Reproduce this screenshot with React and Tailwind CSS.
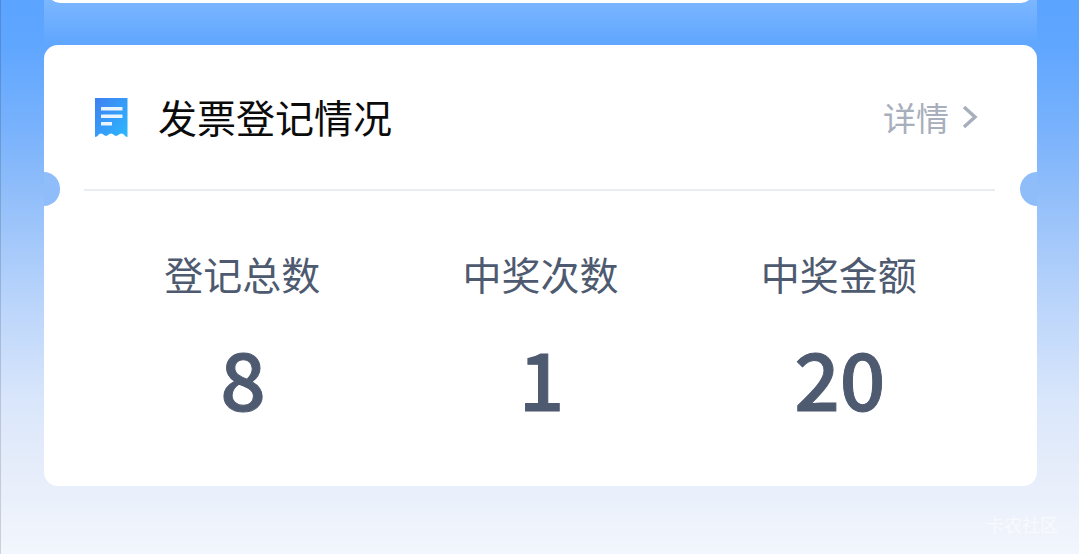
import React from 'react';

const font = { fontFamily: '"Noto Sans CJK SC", "Noto Sans", sans-serif' };

const stats = [
  { label: '登记总数', value: '8' },
  { label: '中奖次数', value: '1' },
  { label: '中奖金额', value: '20' },
];

const ReceiptIcon = () => (
  <svg width="33" height="39" viewBox="0 0 33 39" className="shrink-0">
    <defs>
      <linearGradient id="receipt" x1="0" y1="0" x2="1" y2="1">
        <stop offset="0" stopColor="#3f7ff1" />
        <stop offset="1" stopColor="#2cb8ff" />
      </linearGradient>
    </defs>
    <path
      d="M0 0H32.5V39C30 39 29 35.500 26.500 35.500C24 35.500 23 38 21 38C19 38 18.500 35.500 16 35.500C13.500 35.500 13 38 11 38C9 38 8.500 35.500 6 35.500C3.500 35.500 3 39 0 39Z"
      fill="url(#receipt)"
    />
    <rect x="6" y="9" width="21.500" height="3.400" rx="0.500" fill="#eaf4ff" />
    <rect x="6" y="16.500" width="21.500" height="3.400" rx="0.500" fill="#eaf4ff" />
    <rect x="6" y="24" width="11" height="3.400" rx="0.500" fill="#eaf4ff" />
  </svg>
);

export default function App() {
  return (
    <div
      style={font}
      className="relative h-[554px] w-[1079px] overflow-hidden border-l border-black/15 bg-[linear-gradient(180deg,#5ba4ff_0px,#5fa6ff_45px,#79b2fc_130px,#8fbdfa_189px,#b9d4fb_300px,#d9e6fb_400px,#e6edfa_470px,#f2f6fd_554px)]"
    >
      {/* lighter strip between the two cards */}
      <div className="absolute left-[43px] top-0 h-[45px] w-[993px] bg-[linear-gradient(180deg,rgba(255,255,255,0.2),rgba(255,255,255,0))]" />

      <div className="relative ml-[47px] mr-[46px] mt-[-17px] h-[20px] rounded-b-[12px] bg-white" />

      <div className="relative ml-[43px] mt-[42px] h-[441px] w-[993px] overflow-hidden rounded-[14px] bg-white">
        <div className="absolute left-[-17px] top-[127px] h-[34px] w-[33px] rounded-full bg-[#8fbdfa]" />
        <div className="absolute right-[-17px] top-[127px] h-[34px] w-[34px] rounded-full bg-[#8fbdfa]" />

        <div className="ml-[40px] mr-[42px] flex h-[146px] items-center border-b-2 border-[#e9ecf1] pl-[11px] pr-[15px]">
          <ReceiptIcon />
          <span className="ml-[30px] mb-[1px] text-[39px] leading-none text-[#0b0b0b]">发票登记情况</span>
          <div className="ml-auto flex items-center">
            <span className="text-[33px] leading-none text-[#a8afbc]">详情</span>
            <svg width="20" height="26" viewBox="0 0 20 26" className="ml-[11px]">
              <path d="M4 3L15 13L4 23" fill="none" stroke="#a8afbc" strokeWidth="3.500" />
            </svg>
          </div>
        </div>

        <div className="grid grid-cols-3 px-[49px] pt-[63px]">
          {stats.map((s) => (
            <div key={s.label} className="flex flex-col items-center">
              <span className="text-[39px] leading-none text-[#4e5a70]">{s.label}</span>
              <span className="ml-[2px] mt-[33px] text-[80px] font-medium leading-[100px] text-[#4e5a70] [-webkit-text-stroke:1px_#4e5a70]">
                {s.value}
              </span>
            </div>
          ))}
        </div>
      </div>

      <span className="absolute bottom-[21px] right-[21px] text-[18px] leading-none text-white/60">卡农社区</span>
    </div>
  );
}
